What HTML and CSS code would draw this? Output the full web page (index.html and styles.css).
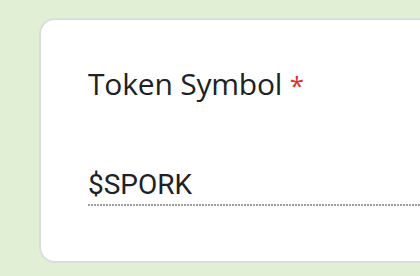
FILE: index.html
```html
<!DOCTYPE html>
<html lang="en">
<head>
    <meta charset="UTF-8">
    <meta name="viewport" content="width=device-width, initial-scale=1.0">
    <title>Token Symbol</title>
    <link rel="stylesheet" href="styles.css">
</head>
<body>
    <div class="card">
        <div class="question">
            <h2>Token Symbol <span class="required">*</span></h2>
            <div class="answer">$SPORK</div>
        </div>
    </div>
</body>
</html>
```

FILE: styles.css
```css
body {
    margin: 0;
    padding: 18px 0 0 39px;
    background-color: #e1f0d5;
    height: 276px;
    box-sizing: border-box;
    overflow: hidden;
}
.card {
    background-color: #fff;
    border: 2px solid #dadce0;
    border-right: none;
    border-radius: 16px 0 0 16px;
    height: 245px;
    box-sizing: border-box;
    padding: 48px 0 0 47px;
}
.question h2 {
    margin: 0;
    font-family: "Open Sans", sans-serif;
    font-weight: 400;
    font-size: 30px;
    line-height: 32px;
    letter-spacing: -0.2px;
    color: #202124;
}
.required {
    color: #d93025;
    font-size: 26px;
}
.answer {
    margin-top: 68px;
    font-family: Roboto, sans-serif;
    font-size: 28px;
    line-height: 32px;
    color: #202124;
    padding-bottom: 5px;
    background-image: repeating-linear-gradient(to right, #9e9e9e 0 2px, transparent 2px 3px);
    background-size: 100% 2px;
    background-position: bottom left;
    background-repeat: no-repeat;
}
```
